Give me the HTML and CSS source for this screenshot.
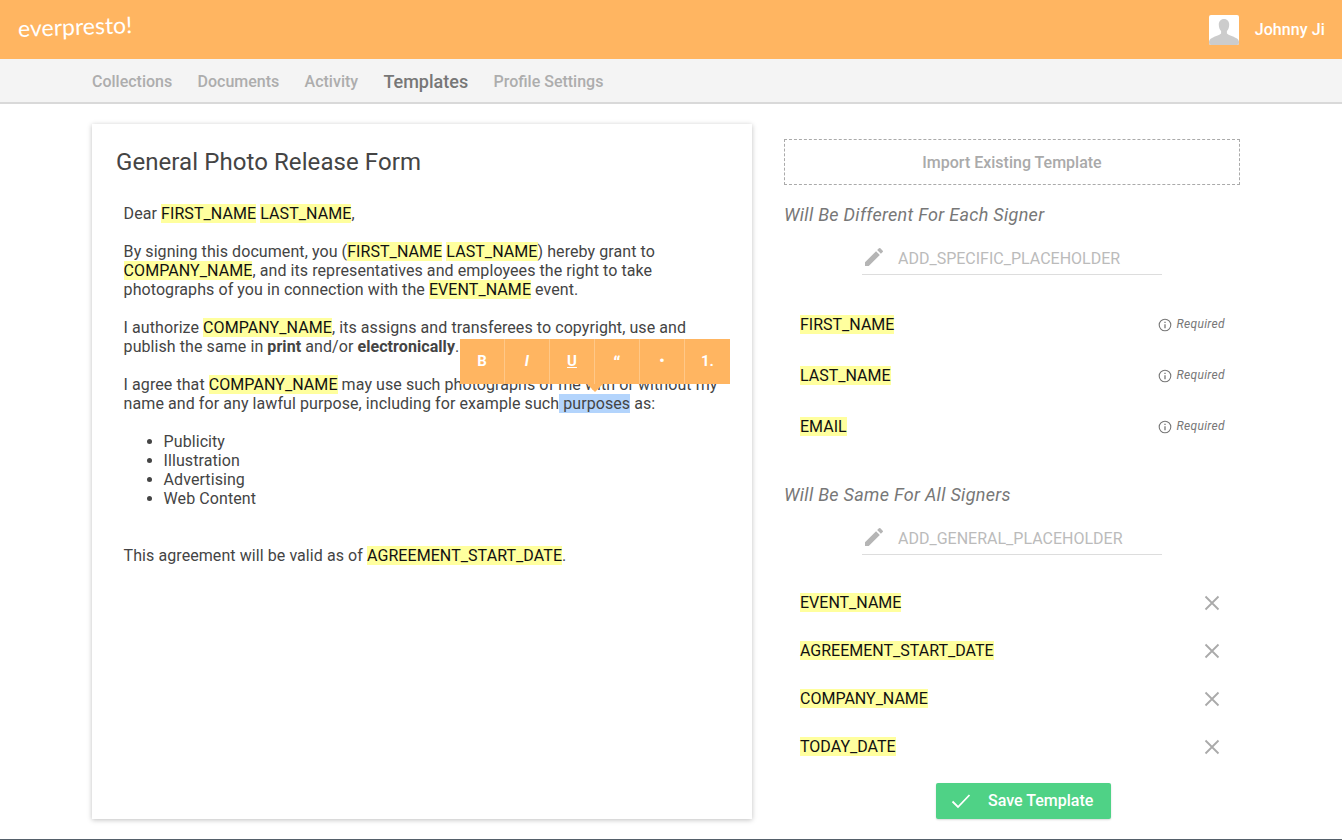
FILE: index.html
```html
<!DOCTYPE html>
<html lang="en">
<head>
    <meta charset="UTF-8">
    <title>everpresto - Templates</title>
    <link rel="stylesheet" href="styles.css">
</head>
<body>
    <header class="topbar">
        <span class="logo">everpresto!</span>
        <div class="user">
            <svg class="avatar" viewBox="0 0 30 30" width="30" height="30">
                <rect width="30" height="30" rx="2" fill="#fff"/>
                <path d="M15 4c-3.400 0-5.200 2.500-5.200 5.800 0 2.600 1 5 2.300 6.300v2.400c-1.500 1.600-6.500 2.800-9.100 4.500C1 24 0 25.500 0 27v1a2 2 0 0 0 2 2h26a2 2 0 0 0 2-2v-1c0-1.500-1-3-3-4-2.600-1.700-7.600-2.900-9.100-4.500v-2.400c1.300-1.300 2.300-3.700 2.300-6.300C20.200 6.500 18.400 4 15 4z" fill="#ccc"/>
            </svg>
            <span class="user-name">Johnny Ji</span>
        </div>
    </header>

    <nav class="subnav">
        <a>Collections</a>
        <a>Documents</a>
        <a>Activity</a>
        <a class="active">Templates</a>
        <a>Profile Settings</a>
    </nav>

    <main class="content">
        <section class="card">
            <h1>General Photo Release Form</h1>
            <div class="doc">
                <p>Dear <mark>FIRST_NAME</mark> <mark>LAST_NAME</mark>,</p>
                <p>By signing this document, you (<mark>FIRST_NAME</mark> <mark>LAST_NAME</mark>) hereby grant to<br><mark>COMPANY_NAME</mark>, and its representatives and employees the right to take<br>photographs of you in connection with the <mark>EVENT_NAME</mark> event.</p>
                <p>I authorize <mark>COMPANY_NAME</mark>, its assigns and transferees to copyright, use and<br>publish the same in <b>print</b> and/or <b>electronically</b>.</p>
                <p>I agree that <mark>COMPANY_NAME</mark> may use such photographs of me with or without my<br>name and for any lawful purpose, including for example such<span class="selected"> purposes</span> as:</p>
                <ul>
                    <li>Publicity</li>
                    <li>Illustration</li>
                    <li>Advertising</li>
                    <li>Web Content</li>
                </ul>
                <p>This agreement will be valid as of <mark>AGREEMENT_START_DATE</mark>.</p>
            </div>
            <div class="toolbar">
                <span class="tool">B</span>
                <span class="tool tool-i">I</span>
                <span class="tool tool-u">U</span>
                <span class="tool tool-q">“</span>
                <span class="tool">•</span>
                <span class="tool">1.</span>
            </div>
        </section>

        <aside class="side">
            <div class="import">Import Existing Template</div>

            <h2>Will Be Different For Each Signer</h2>
            <div class="add">
                <svg class="pencil" viewBox="0 0 24 24" width="24" height="24"><path d="M3 17.250V21h3.750L17.810 9.940l-3.750-3.750L3 17.250zM20.710 7.040a1 1 0 0 0 0-1.410l-2.340-2.340a1 1 0 0 0-1.410 0l-1.830 1.830 3.750 3.750 1.830-1.830z" fill="#b5b5b5"/></svg>
                <span>ADD_SPECIFIC_PLACEHOLDER</span>
            </div>
            <ul class="fields fields-req">
                <li><mark>FIRST_NAME</mark><span class="req"><svg viewBox="0 0 14 14" width="14" height="14"><circle cx="7" cy="7" r="5.800" fill="none" stroke="#777" stroke-width="1.100"/><path d="M7 6.200v4M7 3.800v1.300" stroke="#777" stroke-width="1.300"/></svg><i>Required</i></span></li>
                <li><mark>LAST_NAME</mark><span class="req"><svg viewBox="0 0 14 14" width="14" height="14"><circle cx="7" cy="7" r="5.800" fill="none" stroke="#777" stroke-width="1.100"/><path d="M7 6.200v4M7 3.800v1.300" stroke="#777" stroke-width="1.300"/></svg><i>Required</i></span></li>
                <li><mark>EMAIL</mark><span class="req"><svg viewBox="0 0 14 14" width="14" height="14"><circle cx="7" cy="7" r="5.800" fill="none" stroke="#777" stroke-width="1.100"/><path d="M7 6.200v4M7 3.800v1.300" stroke="#777" stroke-width="1.300"/></svg><i>Required</i></span></li>
            </ul>

            <h2 class="second">Will Be Same For All Signers</h2>
            <div class="add">
                <svg class="pencil" viewBox="0 0 24 24" width="24" height="24"><path d="M3 17.250V21h3.750L17.810 9.940l-3.750-3.750L3 17.250zM20.710 7.040a1 1 0 0 0 0-1.410l-2.340-2.340a1 1 0 0 0-1.410 0l-1.830 1.830 3.750 3.750 1.830-1.830z" fill="#b5b5b5"/></svg>
                <span>ADD_GENERAL_PLACEHOLDER</span>
            </div>
            <ul class="fields fields-gen">
                <li><mark>EVENT_NAME</mark><svg class="x" viewBox="0 0 16 16" width="16" height="16"><path d="M1.500 1.500l13 13M14.500 1.500l-13 13" stroke="#aaa" stroke-width="1.800"/></svg></li>
                <li><mark>AGREEMENT_START_DATE</mark><svg class="x" viewBox="0 0 16 16" width="16" height="16"><path d="M1.500 1.500l13 13M14.500 1.500l-13 13" stroke="#aaa" stroke-width="1.800"/></svg></li>
                <li><mark>COMPANY_NAME</mark><svg class="x" viewBox="0 0 16 16" width="16" height="16"><path d="M1.500 1.500l13 13M14.500 1.500l-13 13" stroke="#aaa" stroke-width="1.800"/></svg></li>
                <li><mark>TODAY_DATE</mark><svg class="x" viewBox="0 0 16 16" width="16" height="16"><path d="M1.500 1.500l13 13M14.500 1.500l-13 13" stroke="#aaa" stroke-width="1.800"/></svg></li>
            </ul>

            <button class="save">
                <svg viewBox="0 0 20 16" width="20" height="16"><path d="M1.500 8.500l5.500 5.500L18.500 2" fill="none" stroke="#fff" stroke-width="1.800"/></svg>
                Save Template
            </button>
        </aside>
    </main>
    <div class="edge"></div>
</body>
</html>
```

FILE: styles.css
```css
* {
    box-sizing: border-box;
}
html, body {
    height: 840px;
    overflow: hidden;
}
body {
    margin: 0;
    font-family: Roboto, "Liberation Sans", sans-serif;
    font-size: 16px;
    line-height: 19px;
    color: #444;
    background-color: #fff;
    display: flex;
    flex-direction: column;
}
.topbar {
    height: 59px;
    flex: none;
    background-color: #ffb561;
    display: flex;
    align-items: center;
    justify-content: space-between;
    padding: 0 17px 0 18px;
}
.logo {
    font-family: Lato, sans-serif;
    font-weight: 400;
    font-size: 23px;
    line-height: 30px;
    color: #fff;
    transform: rotate(-2deg);
    margin-bottom: 8px;
}
.user {
    display: flex;
    align-items: center;
    gap: 16px;
}
.avatar {
    display: block;
}
.user-name {
    color: #fff;
    font-weight: 500;
    letter-spacing: 0.1px;
}
.subnav {
    height: 45px;
    flex: none;
    background-color: #f4f4f4;
    border-bottom: 2px solid #d9d9d9;
    padding: 1px 0 0 92px;
    display: flex;
    align-items: center;
    gap: 25.300px;
}
.subnav a {
    color: #adadad;
    font-weight: 500;
}
.subnav a.active {
    color: #777;
    font-size: 18px;
}
.content {
    flex: 1;
    display: flex;
    align-items: flex-start;
    gap: 32px;
    padding: 20px 0 0 92px;
}
.card {
    position: relative;
    width: 660px;
    height: 695px;
    padding: 22px 24px;
    background-color: #fff;
    box-shadow: 0 1px 5px rgba(0, 0, 0, 0.25);
}
h1 {
    margin: 0;
    font-size: 24px;
    line-height: 32px;
    font-weight: 400;
    color: #444;
    letter-spacing: 0.08px;
}
.doc {
    padding: 26px 8px 0 7.600px;
    letter-spacing: 0.075px;
}
.doc p {
    margin: 0 0 19px;
}
.doc ul {
    margin: 0 0 38px;
    padding-left: 40px;
}
mark {
    background-color: #ffff9e;
    color: #111;
}
.selected {
    background-color: #b3d4fc;
}
.toolbar {
    position: absolute;
    left: 368px;
    top: 215px;
    display: flex;
    background-color: #ffb561;
    color: #fff;
    font-weight: 700;
    font-size: 15px;
}
.toolbar::after {
    content: "";
    position: absolute;
    left: 127px;
    top: 45px;
    border: 8px solid transparent;
    border-top-color: #ffb561;
    border-bottom: 0;
}
.tool {
    width: 45px;
    height: 45px;
    display: flex;
    align-items: center;
    justify-content: center;
    border-right: 1px solid #ffc888;
}
.tool:last-child {
    border-right: 0;
}
.tool-i {
    font-style: italic;
}
.tool-u {
    text-decoration: underline;
}
.tool-q {
    font-size: 18px;
    padding-top: 4px;
}
.side {
    width: 456px;
    padding-top: 15px;
}
.import {
    height: 46px;
    border: 1px dashed #aaa;
    display: flex;
    align-items: center;
    justify-content: center;
    color: #aaa;
    font-weight: 500;
}
h2 {
    margin: 19px 0 0;
    font-size: 18px;
    line-height: 22px;
    font-weight: 400;
    font-style: italic;
    color: #777;
    letter-spacing: 0.3px;
}
h2.second {
    margin-top: 32px;
}
.add {
    width: 300px;
    height: 37px;
    margin: 12px auto 0 78px;
    padding-top: 4px;
    border-bottom: 1px solid #ddd;
    display: flex;
    align-items: center;
    gap: 12px;
    color: #bbb;
}
.pencil {
    display: block;
    flex: none;
    margin-top: -2px;
}
.fields {
    list-style: none;
    margin: 0;
    padding: 0 15px 0 16px;
}
.fields li {
    display: flex;
    align-items: center;
    justify-content: space-between;
}
.fields-req {
    padding-top: 24px;
}
.fields-req li {
    height: 51px;
}
.fields-gen {
    padding: 23px 20px 0 16px;
}
.fields-gen li {
    height: 48px;
}
.x {
    margin-top: 2px;
}
.req {
    display: flex;
    align-items: center;
    gap: 4px;
    font-size: 12px;
    color: #777;
}
.req i {
    letter-spacing: 0.35px;
}
.req svg {
    display: block;
}
.save {
    display: flex;
    align-items: center;
    gap: 17px;
    width: 175px;
    height: 36px;
    margin: 13px auto 0 152px;
    padding: 0 0 1px 15px;
    border: none;
    border-radius: 2px;
    background-color: #4fd286;
    color: #fff;
    font-family: inherit;
    font-size: 16px;
    font-weight: 500;
    box-shadow: 0 1px 2px rgba(0, 0, 0, 0.15);
}
.edge {
    position: absolute;
    left: 0;
    right: 0;
    top: 839px;
    height: 1px;
    background-color: #55606a;
}
```
